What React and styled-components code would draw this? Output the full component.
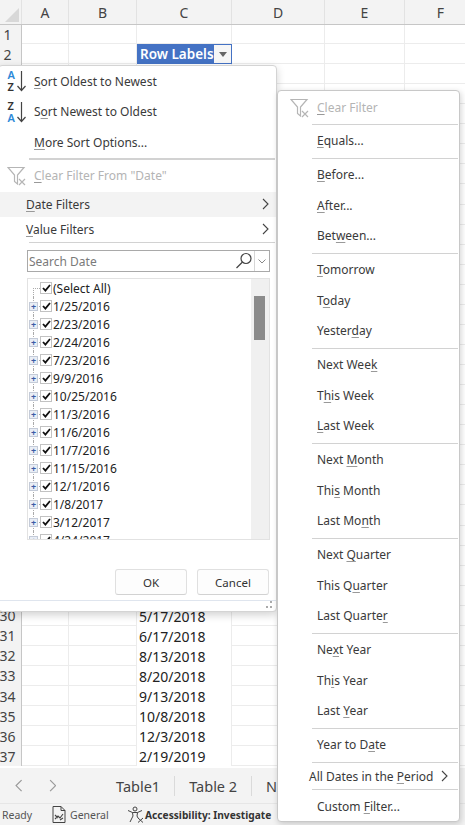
import React from "react";
import styled, { createGlobalStyle } from "styled-components";

const Global = createGlobalStyle`
  html, body { margin: 0; padding: 0; background: #fff; }
  body { font-family: "Noto Sans", "Open Sans", sans-serif; color: #333; }
`;

const Root = styled.div`
  position: relative; width: 465px; height: 825px; overflow: hidden;
  display: flex; flex-direction: column; background: #fff;
`;

const Sheet = styled.div`flex: 1; min-height: 0; overflow: hidden;`;
const HeaderRow = styled.div`
  display: grid; grid-template-columns: 22px 47px 68px 95px 93px 80px 72px;
  height: 25px; background: #f3f3f3; border-bottom: 1px solid #c6c6c6; box-sizing: border-box;
`;
const Corner = styled.div`
  position: relative; border-right: 1px solid #e2e2e2;
  &::after { content: ""; position: absolute; right: 2px; bottom: 2px; border-style: solid;
    border-width: 0 0 14px 14px; border-color: transparent transparent #d8d8d8 transparent; }
`;
const ColHead = styled.div`
  display: flex; align-items: center; justify-content: center; font-size: 14px; color: #444;
  border-right: 1px solid #e2e2e2;
`;
const Row = styled.div`
  display: grid; grid-template-columns: 22px 47px 68px 95px 93px 80px 72px;
  height: ${p => p.$h}px; box-sizing: border-box;
`;
const RowHead = styled.div`
  background: #f3f3f3; border-right: 1px solid #c6c6c6; font-size: 14px; color: #444;
  display: flex; align-items: center; justify-content: center; padding-right: 6px; box-sizing: border-box;
`;
const Cell = styled.div`
  border-right: 1px solid #ececec; border-bottom: 1px solid #ececec; box-sizing: border-box;
`;
const DateCell = styled.div`
  font-size: 14px; color: #222; padding: 1px 0 0 2px; display: flex; align-items: center;
  border-right: 1px solid #ececec; white-space: nowrap; box-sizing: border-box;
`;
const PivotHead = styled.div`
  background: #4472c4; color: #fff; font-size: 13.5px; font-weight: 600; box-sizing: border-box;
  display: flex; align-items: center; justify-content: space-between; padding: 0 1px 0 3px;
  white-space: nowrap;
`;
const DropBtn = styled.div`
  width: 17px; height: 18px; background: #f6f6f6; display: flex; align-items: center; justify-content: center;
  &::after { content: ""; border-style: solid; border-width: 5px 4.5px 0 4.5px; border-color: #666 transparent transparent transparent; }
`;

const Tabs = styled.div`
  height: 35px; background: #f3f3f3; display: flex; align-items: center; flex-shrink: 0;
`;
const Nav = styled.div`display: flex; align-items: center; gap: 26px; padding-left: 15px; width: 102px; box-sizing: border-box;`;
const Tab = styled.div`font-size: 14.5px; color: #444; padding: 0 14px; white-space: nowrap; border-right: ${p => p.$last ? "none" : "1px solid #dadada"}; line-height: 20px;`;

const Status = styled.div`
  height: 22px; background: #f3f3f3; border-top: 1px solid #e6e6e6; box-sizing: border-box; flex-shrink: 0;
  display: flex; align-items: center; font-size: 10.5px; color: #555; padding-left: 2px; white-space: nowrap;
`;
const Ready = styled.span`width: 50px;`;
const General = styled.span`margin-left: 4px; width: 57px;`;
const Access = styled.span`margin-left: 1px; font-weight: 700; color: #333; font-size: 10.2px;`;

const Menu = styled.div`
  position: absolute; left: -2px; top: 65px; width: 279px; height: 547px; box-sizing: border-box;
  background: #fff; border: 1px solid #d4d4d4; border-radius: 4px;
  box-shadow: 0 3px 8px rgba(0,0,0,.18); display: flex; flex-direction: column;
`;
const SubMenu = styled.div`
  position: absolute; left: 277px; top: 90px; width: 183px; height: 732px; box-sizing: border-box;
  background: #fff; border: 1px solid #c8c8c8; border-radius: 4px;
  box-shadow: 1px 2px 6px rgba(0,0,0,.18); display: flex; flex-direction: column;
`;
const Item = styled.div`
  height: ${p => p.$h || 31}px; flex-shrink: 0; display: flex; align-items: center; box-sizing: border-box;
  font-size: 12px; white-space: nowrap; color: ${p => p.$off ? "#b4b4b4" : "#3a3a3a"};
  padding-left: ${p => p.$pl ?? 0}px;
  background: ${p => p.$hover ? "#f3f3f3" : "transparent"};
`;
const GroupItem = styled(Item)`padding-bottom: 2px;`;
const LastItem = styled(Item)`flex: 1; height: auto; padding-top: 2px;`;
const IconSlot = styled.span`width: ${p => p.$w || 27}px; flex-shrink: 0; display: flex; align-items: center;`;
const Label = styled.span`flex: ${p => p.$grow ? 1 : "none"};`;
const Arrow = styled.span`display: flex; margin-right: ${p => p.$mr || 7}px;`;
const Key = styled.span`text-decoration: underline; text-decoration-color: #999; text-underline-offset: 2px;`;
const Divider = styled.div`
  height: ${p => p.$t || 1}px; background: #d2d2d2; flex-shrink: 0; margin-left: ${p => p.$ml}px; margin-right: 1px;
`;
const Group = styled.div`padding: 1.25px 0; flex-shrink: 0;`;

const Search = styled.div`
  margin: 7px 6px 0 28px; height: 22px; border: 1.5px solid #a9a9a9; box-sizing: border-box; display: flex; align-items: center;
  font-size: 12px; color: #7a7a7a; padding-left: 1px; flex-shrink: 0;
`;
const SearchText = styled.span`flex: 1;`;
const SearchIcon = styled.span`display: flex; width: 19px; height: 100%; align-items: center;`;
const SearchDrop = styled.span`display: flex; width: 14px; height: 100%; align-items: center; justify-content: center; border-left: 1px solid #d6d6d6;`;

const List = styled.div`
  margin: 6px 6px 0 28px; height: 262px; border: 1px solid #e2e2e2; box-sizing: border-box; display: flex; flex-shrink: 0; overflow: hidden;
`;
const Tree = styled.div`flex: 1; overflow: hidden;`;
const TreeRow = styled.div`
  position: relative; height: 18px; display: flex; align-items: center; font-size: 12px; color: #222; white-space: nowrap;
  padding-left: ${p => p.$top ? 12 : 1}px;
  &::before { content: ""; position: absolute; left: 5px; top: ${p => p.$top ? 9 : 0}px; bottom: 0; border-left: 1px dotted #aaa; }
  &::after { content: ""; position: absolute; left: 5px; top: 9px; width: 7px; border-top: 1px dotted #aaa; }
`;
const Plus = styled.span`
  position: relative; z-index: 1; width: 9px; height: 9px; background: #e9eef6; border: 1px solid #c4cbd8; box-sizing: border-box;
  margin-right: 2px; flex-shrink: 0; color: #3b5ba5; font-size: 9px; font-weight: 700; line-height: 7px; text-align: center;
`;
const Check = styled.span`
  position: relative; z-index: 1; width: 12px; height: 12px; border: 1px solid #c2c2c2; background: #fff; box-sizing: border-box;
  margin-right: 1px; flex-shrink: 0; display: flex; align-items: center; justify-content: center;
`;
const Track = styled.div`width: 18px; background: #f0f0f0; flex-shrink: 0; padding: 17px 4px 0 3px; box-sizing: border-box;`;
const Thumb = styled.div`height: 44px; background: #8b8b8b;`;

const Buttons = styled.div`display: flex; gap: 10px; justify-content: flex-end; margin: 29px 7px 0 0; flex-shrink: 0;`;
const Btn = styled.div`
  width: 72px; height: 26px; border: 1px solid #e0e0e0; border-bottom-color: #d2d2d2; border-radius: 3px; background: #fdfdfd; box-sizing: border-box;
  display: flex; align-items: center; justify-content: center; font-size: 11.5px; color: #333;
`;
const Foot = styled.div`
  margin-top: 5px; flex: 1; border-top: 1px solid #dfe5ee; display: flex; justify-content: flex-end; align-items: flex-end; padding: 0 3px 2px 0;
`;

const keyed = (s, grow) => {
  const i = s.indexOf("_");
  return <Label $grow={grow}>{s.slice(0, i)}<Key>{s[i + 1]}</Key>{s.slice(i + 2)}</Label>;
};

const SortIcon = ({ flip }) => (
  <svg width="22" height="26" viewBox="0 0 22 26">
    <text x="0.5" y="11" fontSize="11" fontWeight="600" fontFamily="Noto Sans" fill={flip ? "#333" : "#2b88d8"}>{flip ? "Z" : "A"}</text>
    <text x="0.5" y="22.5" fontSize="11" fontWeight="600" fontFamily="Noto Sans" fill={flip ? "#2b88d8" : "#333"}>{flip ? "A" : "Z"}</text>
    <path d="M14.5 3v19M10.5 18l4 4.5 4-4.5" fill="none" stroke="#444" strokeWidth="1.2" />
  </svg>
);
const FilterX = () => (
  <svg width="20" height="20" viewBox="0 0 20 20" fill="none" stroke="#b5b5b5">
    <path d="M1 1.5h16l-6.5 7.5v9l-3-2.5V9z" strokeWidth="1.2" />
    <path d="M12 13l6 6M18 13l-6 6" strokeWidth="1.2" />
  </svg>
);
const Chevron = ({ dir = "right", color = "#444", size = 10 }) => (
  <svg width={size * 0.7} height={size * 1.2} viewBox="0 0 7 12" fill="none" stroke={color} strokeWidth="1.1">
    <path d={dir === "right" ? "M1 1l5 5-5 5" : "M6 1L1 6l5 5"} />
  </svg>
);
const Mag = () => (
  <svg width="18" height="18" viewBox="0 0 18 18" fill="none" stroke="#444">
    <circle cx="11" cy="6.5" r="5" strokeWidth="1.2" />
    <path d="M7.5 10L1.5 16" strokeWidth="1.3" />
  </svg>
);
const SmallDown = () => (
  <svg width="8" height="5" viewBox="0 0 8 5" fill="none" stroke="#888"><path d="M.5.5L4 4 7.5.5" /></svg>
);
const Tick = () => (
  <svg width="9" height="8" viewBox="0 0 9 8" fill="none" stroke="#111" strokeWidth="1.8"><path d="M1 4l2.4 2.6L8 1" /></svg>
);
const Grip = () => (
  <svg width="7" height="8" viewBox="0 0 7 8" fill="#aaa">
    <rect x="4" y="0" width="2" height="2" /><rect x="0" y="5" width="2" height="2" /><rect x="4" y="5" width="2" height="2" />
  </svg>
);
const DocIcon = () => (
  <svg width="14" height="17" viewBox="0 0 14 17" fill="none" stroke="#444">
    <path d="M1 .5h8l4 4v12H1z" />
    <path d="M9 .5v4h4" />
    <path d="M3 13l3-3 2 2 3-4M3 9l3 3M8 14l3-2" strokeWidth="1.1" />
  </svg>
);
const AccessIcon = () => (
  <svg width="17" height="17" viewBox="0 0 17 17" fill="none" stroke="#444" strokeWidth="1">
    <circle cx="8" cy="3" r="2" />
    <path d="M1 4.5l4.5 2h5L15 4.5M5.5 6.5L6 10l-3 6M10.5 6.5L10 10l1 2" />
    <path d="M11 12l5 4.5M16 12l-5 4.5" />
  </svg>
);

const dates = ["1/25/2016","2/23/2016","2/24/2016","7/23/2016","9/9/2016","10/25/2016","11/3/2016","11/6/2016","11/7/2016","11/15/2016","12/1/2016","1/8/2017","3/12/2017","4/24/2017"];
const cDates = { 30: "5/17/2018", 31: "6/17/2018", 32: "8/13/2018", 33: "8/20/2018", 34: "9/13/2018", 35: "10/8/2018", 36: "12/3/2018", 37: "2/19/2019" };
const rows = Array.from({ length: 37 }, (_, i) => i + 1);
const groups = [
  ["_Equals..."],
  ["_Before...", "_After...", "Bet_ween..."],
  ["_Tomorrow", "T_oday", "Yester_day"],
  ["Next Wee_k", "T_his Week", "_Last Week"],
  ["Next _Month", "Thi_s Month", "Last Mo_nth"],
  ["Next _Quarter", "This Q_uarter", "Last Quarte_r"],
  ["Ne_xt Year", "Th_is Year", "Last _Year"],
  ["Year to D_ate"],
];

export default function App() {
  return (
    <Root>
      <Global />
      <Sheet>
        <HeaderRow>
          <Corner />
          {["A", "B", "C", "D", "E", "F"].map(c => <ColHead key={c}>{c}</ColHead>)}
        </HeaderRow>
        {rows.map(r => (
          <Row key={r} $h={r === 1 ? 19 : 20.07}>
            <RowHead>{r}</RowHead>
            <Cell /><Cell />
            {r === 1 ? <Cell /> : r === 2 ? <PivotHead>Row Labels<DropBtn /></PivotHead> : <DateCell>{cDates[r]}</DateCell>}
            <Cell /><Cell /><Cell />
          </Row>
        ))}
      </Sheet>
      <Tabs>
        <Nav><Chevron dir="left" color="#999" size={11} /><Chevron color="#999" size={11} /></Nav>
        <Tab>Table1</Tab>
        <Tab>Table 2</Tab>
        <Tab $last>Name</Tab>
      </Tabs>
      <Status>
        <Ready>Ready</Ready>
        <DocIcon />
        <General>General</General>
        <AccessIcon />
        <Access>Accessibility: Investigate</Access>
      </Status>

      <Menu>
        <Item $h={30} $pl={8}><IconSlot><SortIcon /></IconSlot>{keyed("_Sort Oldest to Newest")}</Item>
        <Item $pl={8}><IconSlot><SortIcon flip /></IconSlot>{keyed("S_ort Newest to Oldest")}</Item>
        <Item $pl={8}><IconSlot />{keyed("_More Sort Options...")}</Item>
        <Divider $ml={30} $t={1.5} />
        <Item $h={32} $pl={8} $off><IconSlot><FilterX /></IconSlot>{keyed('_Clear Filter From "Date"')}</Item>
        <Item $h={25} $pl={27} $hover>{keyed("_Date Filters", true)}<Arrow><Chevron /></Arrow></Item>
        <Item $h={25} $pl={27}>{keyed("_Value Filters", true)}<Arrow><Chevron /></Arrow></Item>
        <Divider $ml={30} $t={1.5} />
        <Search>
          <SearchText>Search Date</SearchText>
          <SearchIcon><Mag /></SearchIcon>
          <SearchDrop><SmallDown /></SearchDrop>
        </Search>
        <List>
          <Tree>
            <TreeRow $top><Check><Tick /></Check>(Select All)</TreeRow>
            {dates.map(d => (
              <TreeRow key={d}><Plus>+</Plus><Check><Tick /></Check>{d}</TreeRow>
            ))}
          </Tree>
          <Track><Thumb /></Track>
        </List>
        <Buttons><Btn>OK</Btn><Btn>Cancel</Btn></Buttons>
        <Foot><Grip /></Foot>
      </Menu>

      <SubMenu>
        <Item $h={33} $pl={12} $off><IconSlot><FilterX /></IconSlot>{keyed("_Clear Filter")}</Item>
        <Divider $ml={34} />
        {groups.map((g, i) => (
          <React.Fragment key={i}>
            <Group>
              {g.map(t => <GroupItem key={t} $h={30.5} $pl={39}>{keyed(t)}</GroupItem>)}
            </Group>
            <Divider $ml={34} />
          </React.Fragment>
        ))}
        <Item $h={26} $pl={31}>{keyed("All Dates in the _Period", true)}<Arrow $mr={11}><Chevron /></Arrow></Item>
        <Divider $ml={34} />
        <LastItem $pl={39}>{keyed("Custom _Filter...")}</LastItem>
      </SubMenu>
    </Root>
  );
}
